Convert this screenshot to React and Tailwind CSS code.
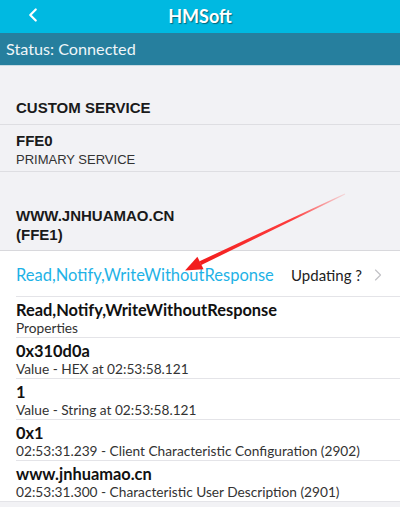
import { ChevronLeft, ChevronRight } from "lucide-react";

const items = [
  { title: "Read,Notify,WriteWithoutResponse", sub: "Properties" },
  { title: "0x310d0a", sub: "Value - HEX at 02:53:58.121" },
  { title: "1", sub: "Value - String at 02:53:58.121" },
  { title: "0x1", sub: "02:53:31.239 - Client Characteristic Configuration (2902)" },
  { title: "www.jnhuamao.cn", sub: "02:53:31.300 - Characteristic User Description (2901)" },
];

function Arrow() {
  return (
    <svg className="pointer-events-none absolute left-0 top-0" width="400" height="507">
      <defs>
        <linearGradient id="tail" x1="345" y1="194" x2="200" y2="263" gradientUnits="userSpaceOnUse">
          <stop offset="0" stopColor="#ff3b3b" stopOpacity="0.15" />
          <stop offset="0.35" stopColor="#ff2a2a" stopOpacity="0.9" />
          <stop offset="1" stopColor="#f21d1d" />
        </linearGradient>
      </defs>
      <polygon points="345.2,194.4 344.8,193.6 199.5,261.2 201.3,265" fill="url(#tail)" />
      <polygon points="185,270.5 197.4,256.8 203.6,269.2" fill="#f21d1d" />
    </svg>
  );
}

export default function App() {
  return (
    <div className="relative h-[507px] w-[400px] overflow-hidden bg-white font-['Lato',sans-serif]">
      {/* header */}
      <div className="relative flex h-[33px] items-center justify-center bg-[#00b9e1]">
        <ChevronLeft className="absolute left-[22px] top-[4px] text-white" size={22} strokeWidth={2.4} />
        <span className="text-[18px] font-bold text-white [text-shadow:1px_1px_1px_rgba(0,0,0,0.45)]">
          HMSoft
        </span>
      </div>
      <div className="flex h-[33px] items-center border-b border-[#c9dbe3] bg-[#267f9e] px-[6px] text-[16.2px] text-[#eef6f9]">
        Status: Connected
      </div>

      {/* service section */}
      <div className="bg-[#f2f2f5] font-['Liberation_Sans',sans-serif] text-[#1a1a1a]">
        <div className="flex h-[59px] items-end border-b border-[#dedee2] px-4 pb-[5px] text-[15px] font-bold">
          CUSTOM SERVICE
        </div>
        <div className="flex h-[47px] flex-col justify-center border-b border-[#dedee2] px-4 pt-[3px]">
          <div className="text-[15px] font-bold leading-[19px]">FFE0</div>
          <div className="text-[13px] leading-[19px] text-[#333]">PRIMARY SERVICE</div>
        </div>
        <div className="flex h-[79px] flex-col justify-end border-b border-[#d8d8dc] px-4 pb-[6px] text-[15px] font-bold leading-[19px]">
          <div>WWW.JNHUAMAO.CN</div>
          <div>(FFE1)</div>
        </div>
      </div>

      {/* characteristic row */}
      <div className="flex h-[45px] items-center justify-between pl-4 pr-[12px] pt-[3px]">
        <span className="text-[16.5px] text-[#1eb2e6]">Read,Notify,WriteWithoutResponse</span>
        <span className="flex items-center gap-[6px] text-[15px] text-[#222]">
          Updating ?
          <ChevronRight size={20} strokeWidth={1.4} className="text-[#c2c2c6]" />
        </span>
      </div>

      <div className="pl-4">
        {items.map((it) => (
          <div key={it.title} className="flex h-[41px] flex-col justify-center border-t border-[#e4e4e8] pt-[1px]">
            <div className="text-[16.4px] font-bold leading-[19px] text-[#111]">{it.title}</div>
            <div className="text-[13.7px] leading-[17px] text-[#333]">{it.sub}</div>
          </div>
        ))}
      </div>
      <div className="h-[6px] border-t border-[#e4e4e8] bg-[#f2f2f5]" />

      <Arrow />
    </div>
  );
}
